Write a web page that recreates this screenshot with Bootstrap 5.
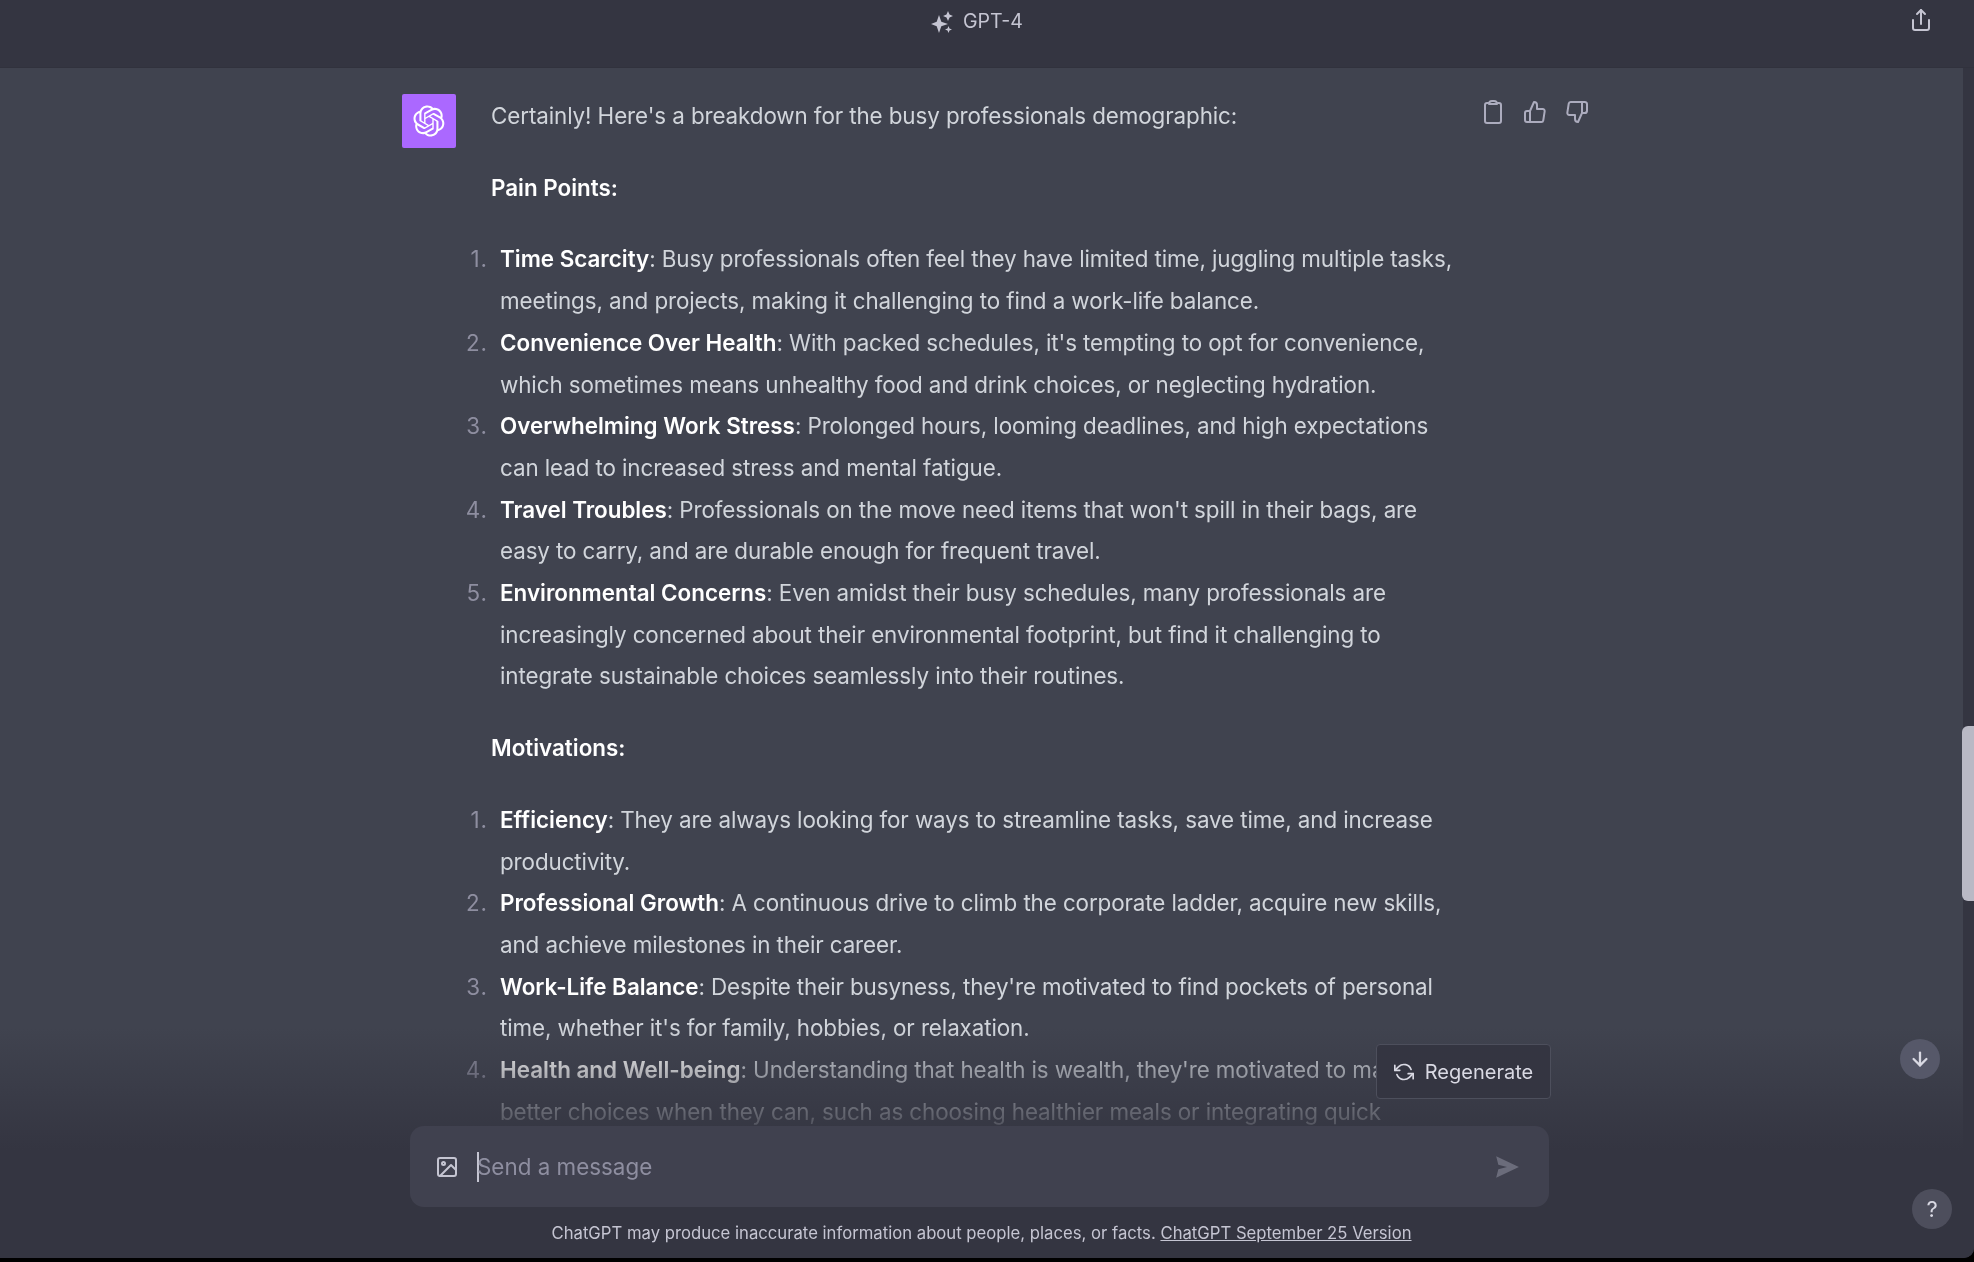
<!DOCTYPE html>
<html lang="en">
<head>
<meta charset="utf-8">
<title>ChatGPT</title>
<link href="https://cdn.jsdelivr.net/npm/bootstrap@5.3.0/dist/css/bootstrap.min.css" rel="stylesheet">
<style>
html,body{height:100%;margin:0;background:#000;overflow:hidden}
body{font-family:Inter,"Liberation Sans",sans-serif}
.shell{height:1258px;background:#343541;border-bottom-right-radius:10px;overflow:hidden;position:relative;filter:blur(.55px)}
.topbar{height:68px;background:#343541;border-bottom:1px solid #31323d;color:#c5c5d2;font-size:19.6px;padding:0 20px 24px 0}
.topbar .share{position:absolute;right:41px;top:4px}
.body-row{height:1190px}
.thread{background:#40434f;overflow:hidden;color:#d1d5db;font-size:22.4px;line-height:41.7px;padding:26px 0 0 402px}
.scroll-track{width:11px;position:relative;background:#343541}
.thumb{position:absolute;top:658px;left:-1px;width:12px;height:175px;border-radius:6px 0 0 6px;background:#b9b9c5}
.avatar{width:54px;height:54px;background:#ab68ff;border-radius:2px;flex:none;margin-right:35px}
.msg{width:972px;flex:none;padding-top:1px;letter-spacing:-.1px}
.msg p{margin:0 0 30px}
.msg strong{color:#fff;font-weight:600;letter-spacing:0}
.msg ol{margin:0 0 30px;padding-left:9px;list-style:none;counter-reset:n}
.msg li{counter-increment:n;position:relative}
.msg li::before{content:counter(n) ".";position:absolute;right:100%;margin-right:12px;color:#8e8ea0;letter-spacing:1px}
.tools{gap:18px;margin-left:18px;padding-top:5px;color:#acacbe}
.fade-bottom{position:absolute;left:0;right:11px;top:1028px;bottom:0;background:linear-gradient(to bottom,rgba(52,53,65,0),#343541 53%)}
.regen{position:absolute;left:1376px;top:1044px;width:175px;height:55px;background:#343541;border:1px solid #4d4f5c;border-radius:4px;color:#d9d9e3;font-size:20px;gap:11px}
.composer{position:absolute;left:410px;top:1126px;width:1139px;height:81px;background:#40414f;border-radius:14px;color:#8e8ea0;font-size:22.4px;padding:1px 29px 0 25px}
.caret{width:2px;height:30px;background:#c5c5d2;margin:0 -2px 0 18px}
.legal{position:absolute;left:0;width:1963px;top:1221px;text-align:center;font-size:16.7px;line-height:24px;color:#c5c5d2}
.legal a{color:inherit}
.round-btn{position:absolute;width:40px;height:40px;border-radius:50%;background:#565869;color:#d9d9e3}
.go-down{left:1900px;top:1039px}
.help{left:1912px;top:1189px;background:#4d4e5c;font-size:22px}
</style>
</head>
<body>
<div class="shell">
  <header class="topbar d-flex align-items-center justify-content-center gap-2 position-relative">
    <svg width="24" height="24" viewBox="0 0 24 24" fill="currentColor" aria-hidden="true"><path d="M8 5l2.300 6.700L17 14l-6.700 2.300L8 23l-2.300-6.700L0 14l5.700-2.300z"/><path d="M17 1l1.500 3.500L22 6l-3.500 1.500L17 11l-1.500-3.500L12 6l3.500-1.500z"/><path d="M17.500 16l1 2.500 2.500 1-2.500 1-1 2.500-1-2.500-2.500-1 2.500-1z"/></svg>
    <span>GPT-4</span>
    <span class="share"><svg width="24" height="26" viewBox="0 0 24 26" fill="none" stroke="currentColor" stroke-width="2" stroke-linecap="round" stroke-linejoin="round" aria-hidden="true"><path d="M4 13v8a2 2 0 0 0 2 2h12a2 2 0 0 0 2-2v-8"/><path d="M12 17V3"/><path d="M8 7l4-4 4 4"/></svg></span>
  </header>
  <div class="body-row d-flex">
    <main class="thread flex-grow-1 d-flex align-items-start">
      <div class="avatar d-flex align-items-center justify-content-center">
        <svg width="32" height="32" viewBox="0 0 41 41" fill="#fff" aria-hidden="true"><path d="M37.5324 16.8707C37.9808 15.5241 38.1363 14.0974 37.9886 12.6859C37.8409 11.2744 37.3934 9.91076 36.676 8.68622C35.6126 6.83404 33.9882 5.3676 32.0373 4.4985C30.0864 3.62941 27.9098 3.40259 25.8215 3.85078C24.8796 2.7893 23.7219 1.94125 22.4257 1.36341C21.1295 0.785575 19.7249 0.491269 18.3058 0.500197C16.1708 0.495044 14.0893 1.16803 12.3614 2.42214C10.6335 3.67624 9.34853 5.44666 8.6917 7.47815C7.30085 7.76286 5.98686 8.3414 4.8377 9.17505C3.68854 10.0087 2.73073 11.0782 2.02839 12.312C0.956464 14.1591 0.498905 16.2988 0.721698 18.4228C0.944492 20.5467 1.83612 22.5449 3.268 24.1293C2.81966 25.4759 2.66413 26.9026 2.81182 28.3141C2.95951 29.7256 3.40701 31.0892 4.12437 32.3138C5.18791 34.1659 6.8123 35.6322 8.76321 36.5013C10.7141 37.3704 12.8907 37.5973 14.9789 37.1492C15.9208 38.2107 17.0786 39.0587 18.3747 39.6366C19.6709 40.2144 21.0755 40.5087 22.4946 40.4998C24.6307 40.5054 26.7133 39.8321 28.4418 38.5772C30.1704 37.3223 31.4556 35.5506 32.1119 33.5179C33.5027 33.2332 34.8167 32.6547 35.9659 31.821C37.115 30.9874 38.0728 29.9178 38.7752 28.684C39.8458 26.8371 40.3023 24.6979 40.0789 22.5748C39.8556 20.4517 38.9639 18.4544 37.5324 16.8707ZM22.4978 37.8849C20.7443 37.8874 19.0459 37.2733 17.6994 36.1501C17.7601 36.117 17.8666 36.0586 17.936 36.0161L25.9004 31.4156C26.1003 31.3019 26.2663 31.137 26.3813 30.9378C26.4964 30.7386 26.5563 30.5124 26.5549 30.2825V19.0542L29.9213 20.998C29.9389 21.0068 29.9541 21.0198 29.9656 21.0359C29.977 21.052 29.9842 21.0707 29.9867 21.0902V30.3889C29.9842 32.375 29.1946 34.2791 27.7909 35.6841C26.3872 37.0892 24.4838 37.8806 22.4978 37.8849ZM6.39227 31.0064C5.51397 29.4888 5.19742 27.7107 5.49804 25.9832C5.55718 26.0187 5.66048 26.0818 5.73461 26.1244L13.699 30.7248C13.8975 30.8408 14.1233 30.902 14.3532 30.902C14.583 30.902 14.8088 30.8408 15.0073 30.7248L24.731 25.1103V28.9979C24.7321 29.0177 24.7283 29.0376 24.7199 29.0556C24.7115 29.0736 24.6988 29.0893 24.6829 29.1012L16.6317 33.7497C14.9096 34.7416 12.8643 35.0097 10.9447 34.4954C9.02506 33.9811 7.38785 32.7263 6.39227 31.0064ZM4.29707 13.6194C5.17156 12.0998 6.55279 10.9364 8.19885 10.3327C8.19885 10.4013 8.19491 10.5228 8.19491 10.6071V19.808C8.19351 20.0378 8.25334 20.2638 8.36823 20.4629C8.48312 20.6619 8.64893 20.8267 8.84863 20.9404L18.5723 26.5542L15.206 28.4979C15.1894 28.5089 15.1703 28.5155 15.1505 28.5173C15.1307 28.5191 15.1107 28.516 15.0924 28.5082L7.04046 23.8557C5.32135 22.8601 4.06716 21.2235 3.55289 19.3046C3.03862 17.3858 3.30624 15.3413 4.29707 13.6194ZM31.955 20.0556L22.2312 14.4411L25.5976 12.4981C25.6142 12.4872 25.6333 12.4805 25.6531 12.4787C25.6729 12.4769 25.6928 12.4801 25.7111 12.4879L33.7631 17.1364C34.9967 17.849 36.0017 18.8982 36.6606 20.1613C37.3194 21.4244 37.6047 22.849 37.4832 24.2684C37.3617 25.6878 36.8382 27.0432 35.9743 28.1759C35.1103 29.3086 33.9415 30.1717 32.6047 30.6641C32.6047 30.5947 32.6047 30.4733 32.6047 30.3889V21.188C32.6066 20.9586 32.5474 20.7328 32.4332 20.5338C32.319 20.3348 32.154 20.1698 31.955 20.0556ZM35.3055 15.0128C35.2464 14.9765 35.1431 14.9142 35.069 14.8717L27.1045 10.2712C26.906 10.1554 26.6803 10.0943 26.4504 10.0943C26.2206 10.0943 25.9948 10.1554 25.7963 10.2712L16.0726 15.8858V11.9982C16.0715 11.9783 16.0753 11.9585 16.0837 11.9405C16.0921 11.9225 16.1048 11.9068 16.1207 11.8949L24.1719 7.25025C25.4053 6.53903 26.8158 6.19376 28.2383 6.25482C29.6608 6.31589 31.0364 6.78077 32.2044 7.59508C33.3723 8.40939 34.2842 9.53945 34.8334 10.8531C35.3826 12.1667 35.5464 13.6095 35.3055 15.0128ZM14.2424 21.9419L10.8752 19.9981C10.8576 19.9893 10.8423 19.9763 10.8309 19.9602C10.8195 19.9441 10.8122 19.9254 10.8098 19.9058V10.6071C10.8107 9.18295 11.2173 7.78848 11.9819 6.58696C12.7466 5.38544 13.8377 4.42659 15.1275 3.82264C16.4173 3.21869 17.8524 2.99464 19.2649 3.1767C20.6775 3.35876 22.0089 3.93941 23.1034 4.85067C23.0427 4.88379 22.937 4.94215 22.8668 4.98473L14.9024 9.58517C14.7025 9.69878 14.5366 9.86356 14.4215 10.0626C14.3065 10.2616 14.2466 10.4877 14.2479 10.7175L14.2424 21.9419ZM16.071 17.9991L20.4018 15.4978L24.7325 17.9975V22.9985L20.4018 25.4983L16.071 22.9985V17.9991Z"/></svg>
      </div>
      <article class="msg">
        <p>Certainly! Here's a breakdown for the busy professionals demographic:</p>
        <p><strong>Pain Points:</strong></p>
        <ol>
          <li><strong>Time Scarcity</strong>: Busy professionals often feel they have limited time, juggling multiple tasks, meetings, and projects, making it challenging to find a work-life balance.</li>
          <li><strong>Convenience Over Health</strong>: With packed schedules, it's tempting to opt for convenience, which sometimes means unhealthy food and drink choices, or neglecting hydration.</li>
          <li><strong>Overwhelming Work Stress</strong>: Prolonged hours, looming deadlines, and high expectations can lead to increased stress and mental fatigue.</li>
          <li><strong>Travel Troubles</strong>: Professionals on the move need items that won't spill in their bags, are easy to carry, and are durable enough for frequent travel.</li>
          <li><strong>Environmental Concerns</strong>: Even amidst their busy schedules, many professionals are increasingly concerned about their environmental footprint, but find it challenging to integrate sustainable choices seamlessly into their routines.</li>
        </ol>
        <p><strong>Motivations:</strong></p>
        <ol>
          <li><strong>Efficiency</strong>: They are always looking for ways to streamline tasks, save time, and increase productivity.</li>
          <li><strong>Professional Growth</strong>: A continuous drive to climb the corporate ladder, acquire new skills, and achieve milestones in their career.</li>
          <li><strong>Work-Life Balance</strong>: Despite their busyness, they're motivated to find pockets of personal time, whether it's for family, hobbies, or relaxation.</li>
          <li><strong>Health and Well-being</strong>: Understanding that health is wealth, they're motivated to make better choices when they can, such as choosing healthier meals or integrating quick</li>
        </ol>
      </article>
      <div class="tools d-flex align-items-center">
        <svg width="24" height="26" viewBox="0 0 24 26" fill="none" stroke="currentColor" stroke-width="2" stroke-linecap="round" stroke-linejoin="round" aria-hidden="true"><path d="M8 4H6a2 2 0 0 0-2 2v16a2 2 0 0 0 2 2h12a2 2 0 0 0 2-2V6a2 2 0 0 0-2-2h-2"/><path d="M8 5a3 3 0 0 1 3-3h2a3 3 0 0 1 3 3z"/></svg>
        <svg width="24" height="24" viewBox="0 0 24 24" fill="none" stroke="currentColor" stroke-width="2" stroke-linecap="round" stroke-linejoin="round" aria-hidden="true"><path d="M14 9V5a3 3 0 0 0-3-3l-4 9v11h11.280a2 2 0 0 0 2-1.700l1.380-9a2 2 0 0 0-2-2.300zM7 22H4a2 2 0 0 1-2-2v-7a2 2 0 0 1 2-2h3"/></svg>
        <svg width="24" height="24" viewBox="0 0 24 24" fill="none" stroke="currentColor" stroke-width="2" stroke-linecap="round" stroke-linejoin="round" aria-hidden="true"><path d="M10 15v4a3 3 0 0 0 3 3l4-9V2H5.720a2 2 0 0 0-2 1.700l-1.380 9a2 2 0 0 0 2 2.300zm7-13h2.670A2.310 2.310 0 0 1 22 4v7a2.310 2.310 0 0 1-2.330 2H17"/></svg>
      </div>
    </main>
    <div class="scroll-track"><div class="thumb"></div></div>
  </div>
  <div class="fade-bottom"></div>
  <button type="button" class="regen btn d-flex align-items-center justify-content-center p-0">
    <svg width="20" height="20" viewBox="0 0 24 24" fill="none" stroke="currentColor" stroke-width="2" stroke-linecap="round" stroke-linejoin="round" aria-hidden="true"><path d="M1 4v6h6"/><path d="M23 20v-6h-6"/><path d="M20.490 9A9 9 0 0 0 5.640 5.640L1 10m22 4l-4.640 4.360A9 9 0 0 1 3.510 15"/></svg>
    <span>Regenerate</span>
  </button>
  <div class="composer d-flex align-items-center">
    <svg width="24" height="24" viewBox="0 0 24 24" fill="none" stroke="#c5c5d2" stroke-width="2" stroke-linecap="round" stroke-linejoin="round" aria-hidden="true"><rect x="3" y="3" width="18" height="18" rx="2"/><circle cx="8.500" cy="8.500" r="1.500"/><path d="M21 15l-5-5L5 21"/></svg>
    <span class="caret"></span>
    <span class="flex-grow-1">Send a message</span>
    <svg width="26" height="26" viewBox="0 0 24 24" fill="#6b6c7b" aria-hidden="true"><path d="M2 2l21 10L2 22l2-8 8-2-8-2z"/></svg>
  </div>
  <p class="legal mb-0">ChatGPT may produce inaccurate information about people, places, or facts. <a href="#">ChatGPT September 25 Version</a></p>
  <div class="round-btn go-down d-flex align-items-center justify-content-center">
    <svg width="22" height="22" viewBox="0 0 24 24" fill="none" stroke="currentColor" stroke-width="2.500" stroke-linecap="round" stroke-linejoin="round" aria-hidden="true"><path d="M12 5v14"/><path d="M19 12l-7 7-7-7"/></svg>
  </div>
  <div class="round-btn help d-flex align-items-center justify-content-center">?</div>
</div>
<script src="https://cdn.jsdelivr.net/npm/bootstrap@5.3.0/dist/js/bootstrap.bundle.min.js"></script>
</body>
</html>
